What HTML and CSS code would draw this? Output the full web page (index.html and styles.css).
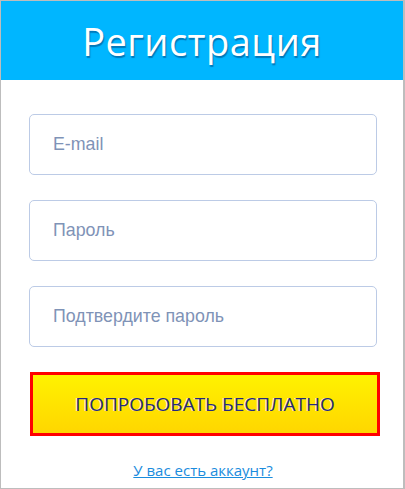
FILE: index.html
```html
<!DOCTYPE html>
<html lang="ru">
<head>
  <meta charset="UTF-8">
  <meta name="viewport" content="width=device-width, initial-scale=1.0">
  <title>Регистрация</title>
  <link rel="stylesheet" href="styles.css">
</head>
<body>
  <div class="panel">
    <div class="header">
      <h1>Регистрация</h1>
    </div>

    <!-- Registration form -->
    <form class="form">
      <input class="field" type="email" placeholder="E-mail">
      <input class="field" type="password" placeholder="Пароль">
      <input class="field" type="password" placeholder="Подтвердите пароль">
      <button class="try-btn" type="button">ПОПРОБОВАТЬ БЕСПЛАТНО</button>
      <a class="login-link" href="#">У вас есть аккаунт?</a>
    </form>
  </div>
</body>
</html>
```

FILE: styles.css
```css
/* Global Styles */
body {
  margin: 0;
  padding: 0;
  background-color: #fff;
}

.panel {
  box-sizing: border-box;
  width: 405px;
  height: 489px;
  border: 1px solid #bdbdbd;
  border-right-width: 2px;
  background-color: #fff;
  overflow: hidden;
}

/* Header */
.header {
  height: 79px;
  background-color: #00b6ff;
  display: flex;
  justify-content: center;
  align-items: center;
}

.header h1 {
  margin: 0;
  font-family: 'Open Sans', sans-serif;
  font-size: 38px;
  font-weight: 400;
  color: #fff;
  letter-spacing: 0.5px;
  text-shadow: 1px 2px 1px rgba(0, 80, 140, 0.6);
}

/* Form */
.form {
  display: flex;
  flex-direction: column;
  padding: 34px 0 0 28px;
}

.field {
  box-sizing: border-box;
  width: 348px;
  height: 61px;
  margin-bottom: 25px;
  padding: 0 0 0 23px;
  border: 1px solid #bccbe6;
  border-radius: 5px;
  font-family: 'Liberation Sans', Arial, sans-serif;
  font-size: 17.8px;
  color: #333;
  outline: none;
}

.field::placeholder {
  color: #7f93b7;
}

.try-btn {
  box-sizing: border-box;
  width: 350px;
  height: 64px;
  margin-left: 1px;
  border: 3px solid #ff0000;
  background: linear-gradient(to bottom, #fff200, #ffd600);
  font-family: 'Open Sans', sans-serif;
  font-size: 19px;
  color: #262a7c;
  text-shadow: -1px 0 0 rgba(255, 255, 255, 0.8);
  cursor: pointer;
}

.login-link {
  align-self: center;
  margin: 24px 0 0 -26px;
  font-family: 'Open Sans', sans-serif;
  font-size: 15px;
  color: #1a8cdd;
}
```
